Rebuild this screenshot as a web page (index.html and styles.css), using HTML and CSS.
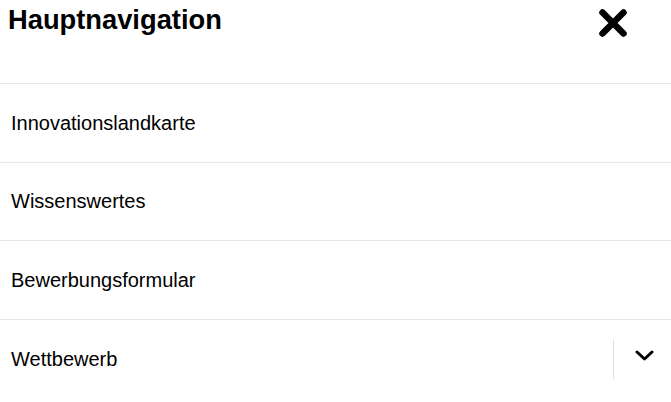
FILE: index.html
```html
<!DOCTYPE html>
<html lang="de">
<head>
<meta charset="utf-8">
<title>Hauptnavigation</title>
<link rel="stylesheet" href="styles.css">
</head>
<body>
<nav class="menu">
  <div class="menu-header">
    <h2 class="menu-title">Hauptnavigation</h2>
    <button class="close" aria-label="Schließen">
      <svg width="28" height="28" viewBox="0 0 28 28"><path d="M3.5 3.5 L24.5 24.5 M24.5 3.5 L3.5 24.5" stroke="#000" stroke-width="6.5" stroke-linecap="round" fill="none"/></svg>
    </button>
  </div>
  <ul class="menu-list">
    <li class="menu-item"><a class="menu-link" href="#">Innovationslandkarte</a></li>
    <li class="menu-item"><a class="menu-link" href="#">Wissenswertes</a></li>
    <li class="menu-item"><a class="menu-link" href="#">Bewerbungsformular</a></li>
    <li class="menu-item"><a class="menu-link" href="#">Wettbewerb</a>
      <button class="toggle" aria-label="Untermenü öffnen">
        <svg width="19" height="11" viewBox="0 0 19 11"><path d="M2 2 L9.5 9 L17 2" stroke="#000" stroke-width="3" stroke-linecap="round" stroke-linejoin="round" fill="none"/></svg>
      </button>
    </li>
  </ul>
</nav>
</body>
</html>
```

FILE: styles.css
```css
* { box-sizing: border-box; }
html, body { margin: 0; padding: 0; background: #fff; }
body { font-family: "Liberation Sans", Arial, sans-serif; color: #000; }

.menu { width: 671px; }

.menu-header {
  height: 83px;
  display: flex;
  justify-content: space-between;
  align-items: flex-start;
  padding: 5px 44px 0 8px;
}
.menu-title {
  margin: 0;
  font-size: 27.3px;
  font-weight: bold;
  line-height: 30px;
}
.close {
  margin-top: 4px;
  padding: 0;
  border: 0;
  background: none;
  width: 28px;
  height: 28px;
  display: flex;
}

.menu-list { list-style: none; margin: 0; padding: 0; }
.menu-item {
  height: 78.67px;
  border-top: 1px solid #e6e6e6;
  display: flex;
  align-items: center;
  justify-content: space-between;
}
.menu-link {
  padding-left: 11px;
  font-size: 20px;
  line-height: 30px;
  color: #000;
  text-decoration: none;
}
.toggle {
  width: 58px;
  height: 40px;
  border: 0;
  border-left: 1px solid #e0e0e0;
  background: none;
  padding: 0 0 7px 3px;
  display: flex;
  align-items: center;
  justify-content: center;
}
.toggle svg { display: block; }
```
